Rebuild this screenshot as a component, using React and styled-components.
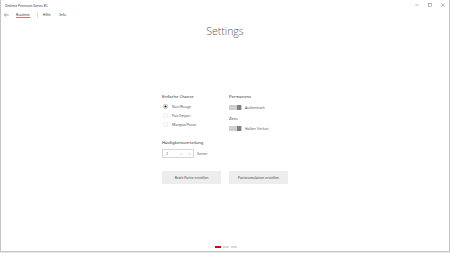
import React from "react";
import styled, { createGlobalStyle } from "styled-components";

const GlobalStyle = createGlobalStyle`
  html, body {
    margin: 0;
    padding: 0;
    background: #e8e8e8;
  }
  body {
    font-family: "Noto Sans", "Open Sans", sans-serif;
    color: #333;
  }
`;

const Window = styled.div`
  width: 448px;
  height: 251px;
  background: #ffffff;
  border: 1px solid #c4c4c4;
  border-top: none;
  display: flex;
  flex-direction: column;
  overflow: hidden;
`;

const TitleBar = styled.div`
  height: 10px;
  display: flex;
  align-items: center;
  justify-content: space-between;
  padding-left: 4px;
  font-size: 3.4px;
  color: #333;
`;

const WinControls = styled.div`
  display: flex;
  align-items: center;
  height: 100%;
`;

const WinButton = styled.div`
  width: 13px;
  height: 10px;
  display: flex;
  align-items: center;
  justify-content: center;
`;

const NavBar = styled.div`
  height: 10px;
  display: flex;
  align-items: center;
  padding-left: 3px;
  font-size: 3.5px;
  color: #333;
`;

const BackArrow = styled.div`
  width: 5px;
  display: flex;
  align-items: center;
  margin-right: 7px;
`;

const NavItem = styled.div`
  position: relative;
  height: 10px;
  line-height: 10px;
  margin-right: ${(p) => p.$gap || 0}px;
  &::after {
    content: "";
    display: ${(p) => (p.$active ? "block" : "none")};
    position: absolute;
    left: 0;
    right: 0;
    bottom: 2px;
    height: 1px;
    background: #e07070;
  }
`;

const NavSep = styled.div`
  width: 1px;
  height: 6px;
  background: #e2e2e2;
  margin: 0 5px 0 0;
`;

const Content = styled.div`
  flex: 1;
  display: flex;
  flex-direction: column;
  align-items: center;
`;

const PageTitle = styled.h1`
  margin: 4px 0 0;
  font-size: 10.5px;
  font-weight: 300;
  color: #5a5a5a;
  line-height: 14px;
  font-family: "Open Sans", "Noto Sans", sans-serif;
`;

const Panel = styled.div`
  margin-top: 56px;
  display: grid;
  grid-template-columns: 59px 59px;
  column-gap: 8px;
`;

const Column = styled.div`
  display: flex;
  flex-direction: column;
`;

const Heading = styled.div`
  font-size: 4.1px;
  color: #333;
  height: 6px;
  line-height: 6px;
  margin-top: ${(p) => p.$top || 0}px;
  margin-bottom: ${(p) => (p.$bottom === undefined ? 2 : p.$bottom)}px;
`;

const Row = styled.div`
  display: flex;
  align-items: center;
  height: 9px;
  font-size: 3.5px;
  color: #555;
`;

const RadioMark = styled.svg`
  width: 5px;
  height: 5px;
  margin: 0 4px 0 1px;
  flex: none;
`;

const Radio = ({ on }) => (
  <RadioMark viewBox="0 0 10 10">
    <circle cx="5" cy="5" r="4.4" fill="none" stroke={on ? "#666" : "#cdcdcd"} strokeWidth="0.7" />
    {on && <circle cx="5" cy="5" r="2.2" fill="#1a1a1a" />}
  </RadioMark>
);

const Toggle = styled.div`
  width: 13px;
  height: 5px;
  background: #cfcfcf;
  margin-right: 3px;
  position: relative;
  flex: none;
  &::after {
    content: "";
    position: absolute;
    right: 1px;
    top: 0;
    width: 4px;
    height: 5px;
    background: #808080;
  }
`;

const SpinRow = styled.div`
  display: flex;
  align-items: center;
  margin-top: 3px;
  font-size: 3.5px;
  color: #555;
`;

const Spinner = styled.div`
  width: 32px;
  height: 9px;
  border: 0.5px solid #d8d8d8;
  display: flex;
  align-items: center;
  padding-left: 3px;
  box-sizing: border-box;
  margin-right: 3px;
`;

const SpinValue = styled.div`
  flex: 1;
`;

const SpinArrow = styled.div`
  width: 8px;
  display: flex;
  justify-content: center;
`;

const ButtonRow = styled.div`
  grid-column: 1 / span 2;
  display: grid;
  grid-template-columns: 59px 59px;
  column-gap: 8px;
  margin-top: 13px;
`;

const Button = styled.div`
  height: 13px;
  background: #ededed;
  font-size: 3.4px;
  color: #444;
  display: flex;
  align-items: center;
  justify-content: center;
`;

const Pager = styled.div`
  margin-top: auto;
  margin-bottom: 3px;
  margin-left: 2px;
  display: flex;
  gap: 2px;
`;

const Dot = styled.div`
  width: 6px;
  height: 2px;
  background: ${(p) => (p.$active ? "#d0021b" : "#d9d9d9")};
`;

const Chevron = ({ up }) => (
  <svg width="3" height="2" viewBox="0 0 6 4">
    <path
      d={up ? "M0.5 3.3 L3 0.8 L5.5 3.3" : "M0.5 0.8 L3 3.3 L5.5 0.8"}
      fill="none"
      stroke="#888"
      strokeWidth="0.8"
    />
  </svg>
);

export default function App() {
  return (
    <>
      <GlobalStyle />
      <Window>
        <TitleBar>
          <span>Onlinez Precision Series EC</span>
          <WinControls>
            <WinButton>
              <svg width="4" height="4" viewBox="0 0 8 8">
                <path d="M0.5 4 H7.5" stroke="#555" strokeWidth="0.8" />
              </svg>
            </WinButton>
            <WinButton>
              <svg width="4" height="4" viewBox="0 0 8 8">
                <rect x="0.6" y="0.6" width="6.8" height="6.8" fill="none" stroke="#555" strokeWidth="0.8" />
              </svg>
            </WinButton>
            <WinButton>
              <svg width="4" height="4" viewBox="0 0 8 8">
                <path d="M0.6 0.6 L7.4 7.4 M7.4 0.6 L0.6 7.4" stroke="#555" strokeWidth="0.8" />
              </svg>
            </WinButton>
          </WinControls>
        </TitleBar>
        <NavBar>
          <BackArrow>
            <svg width="5" height="4" viewBox="0 0 10 8">
              <path d="M9.5 4 H1 M4.2 0.6 L0.8 4 L4.2 7.4" fill="none" stroke="#444" strokeWidth="0.9" />
            </svg>
          </BackArrow>
          <NavItem $active $gap={7}>Roulette</NavItem>
          <NavSep />
          <NavItem $gap={9}>Hilfe</NavItem>
          <NavItem>Info</NavItem>
        </NavBar>
        <Content>
          <PageTitle>Settings</PageTitle>
          <Panel>
            <Column>
              <Heading>Einfache Chance</Heading>
              <Row>
                <Radio on />
                Noir/Rouge
              </Row>
              <Row>
                <Radio />
                Pair/Impair
              </Row>
              <Row>
                <Radio />
                Manque/Passe
              </Row>
              <Heading $top={11} $bottom={0}>Häufigkeitsverteilung</Heading>
              <SpinRow>
                <Spinner>
                  <SpinValue>2</SpinValue>
                  <SpinArrow>
                    <Chevron />
                  </SpinArrow>
                  <SpinArrow>
                    <Chevron up />
                  </SpinArrow>
                </Spinner>
                Serien
              </SpinRow>
            </Column>
            <Column>
              <Heading $bottom={2.5}>Permanenz</Heading>
              <Row>
                <Toggle />
                Authentisch
              </Row>
              <Heading $top={4} $bottom={2.5}>Zero</Heading>
              <Row>
                <Toggle />
                Halber Verlust
              </Row>
            </Column>
            <ButtonRow>
              <Button>Reale Partie erstellen</Button>
              <Button>Partiesimulation erstellen</Button>
            </ButtonRow>
          </Panel>
          <Pager>
            <Dot $active />
            <Dot />
            <Dot />
          </Pager>
        </Content>
      </Window>
    </>
  );
}
